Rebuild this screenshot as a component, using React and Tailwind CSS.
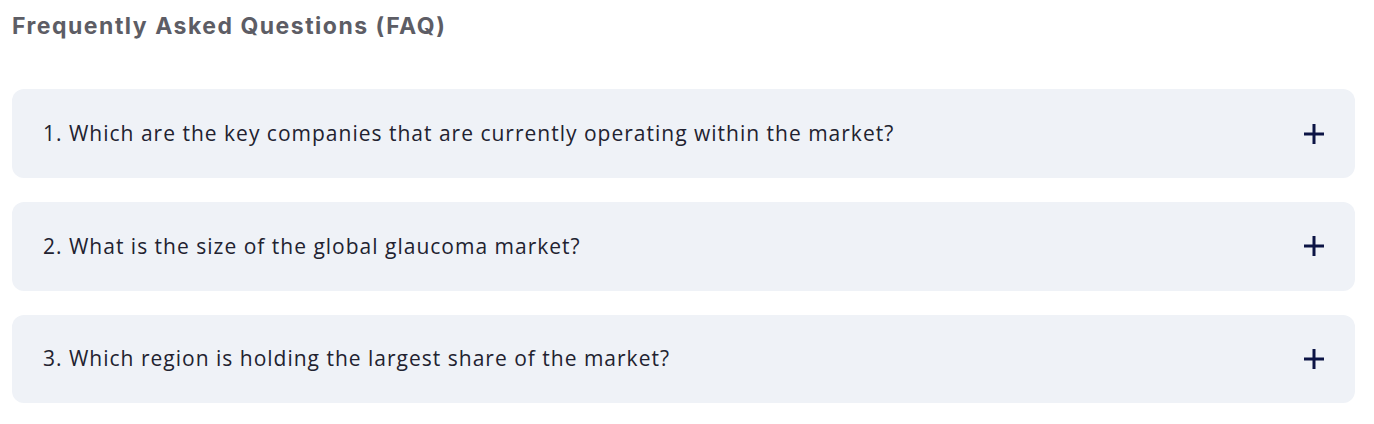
export default function App() {
  const items = [
    "1. Which are the key companies that are currently operating within the market?",
    "2. What is the size of the global glaucoma market?",
    "3. Which region is holding the largest share of the market?",
  ];
  return (
    <div className="w-[1374px] h-[424px] bg-white px-3 pt-[11px]">
      <h2 className="text-[23px] leading-[30px] font-bold tracking-[1.5px] text-[#5d5d65]" style={{ fontFamily: 'Inter, sans-serif' }}>
        Frequently Asked Questions (FAQ)
      </h2>
      <div className="mt-[48.3px] flex flex-col gap-6 w-[1343px]">
        {items.map((q) => (
          <div key={q} className="h-[88.7px] rounded-xl bg-[#eff2f7] flex items-center justify-between pl-[31px] pr-[30px]">
            <span className="text-[21px] tracking-[1px] text-[#222230]" style={{ fontFamily: '"Open Sans", sans-serif' }}>{q}</span>
            <svg width="22" height="22" viewBox="0 0 22 22" className="shrink-0">
              <path d="M11 1v20M1 11h20" stroke="#0c1445" strokeWidth="3" />
            </svg>
          </div>
        ))}
      </div>
    </div>
  );
}
